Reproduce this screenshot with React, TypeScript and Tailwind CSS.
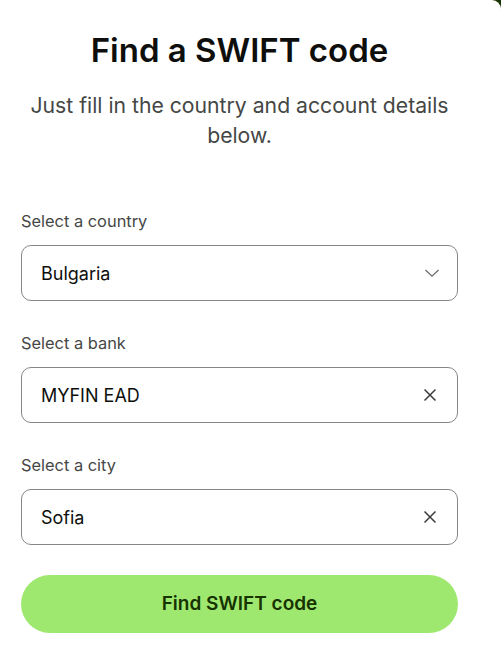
import React from "react";

function Chevron() {
  return (
    <svg width="16" height="16" viewBox="0 0 16 16" fill="none">
      <path d="M1.5 5L8 11.2L14.5 5" stroke="#6a6c6a" strokeWidth="1.3" />
    </svg>
  );
}

function Cross() {
  return (
    <svg width="16" height="16" viewBox="0 0 16 16" fill="none">
      <path d="M2.5 2.5L13.5 13.5M13.5 2.5L2.5 13.5" stroke="#3a3c3a" strokeWidth="1.5" />
    </svg>
  );
}

function Field({ label, value, icon, iconPad }: { label: string; value: string; icon: React.ReactNode; iconPad: string }) {
  return (
    <div className="flex flex-col">
      <div className="text-[16.4px] leading-[24px] text-[#454745] mb-[12px]">{label}</div>
      <div className={"h-[56px] rounded-[10px] border border-[#868685] flex items-center justify-between pl-[19px] " + iconPad}>
        <span className="text-[18px] text-[#0e0f0c]">{value}</span>
        {icon}
      </div>
    </div>
  );
}

export default function App() {
  return (
    <div className="relative min-h-[657px] w-[501px] bg-[#163300]" style={{ fontFamily: "Inter, 'Noto Sans', sans-serif" }}>
      <div className="min-h-[657px] bg-white rounded-tr-[9px] pl-[21px] pr-[43px] pt-[30px]">
        <h1 className="text-center text-[33px] leading-[40px] font-semibold text-[#0e0f0c]">Find a SWIFT code</h1>
        <p className="mt-[20px] text-center text-[21.2px] leading-[30px] text-[#454745]">
          Just fill in the country and account details below.
        </p>
        <div className="mt-[59px] flex flex-col gap-[30px]">
          <Field label="Select a country" value="Bulgaria" icon={<Chevron />} iconPad="pr-[17px]" />
          <Field label="Select a bank" value="MYFIN EAD" icon={<Cross />} iconPad="pr-[19px]" />
          <Field label="Select a city" value="Sofia" icon={<Cross />} iconPad="pr-[19px]" />
        </div>
        <button className="mt-[30px] w-full h-[58px] rounded-full bg-[#9fe870] text-[#163300] text-[19px] font-semibold">
          Find SWIFT code
        </button>
      </div>
    </div>
  );
}
